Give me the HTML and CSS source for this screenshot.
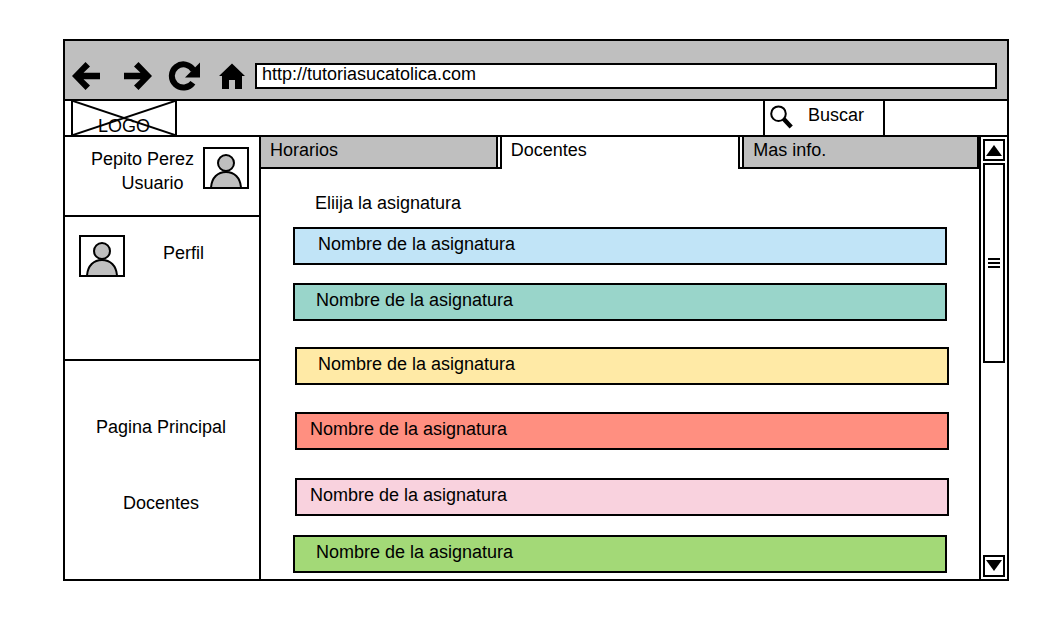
FILE: index.html
```html
<!DOCTYPE html>
<html lang="es">
<head>
<meta charset="utf-8">
<title>Tutorías</title>
<link rel="stylesheet" href="styles.css">
</head>
<body>
<div class="window">
  <div class="toolbar">
    <button class="tool" type="button" aria-label="Atrás">
      <svg width="28" height="28" viewBox="0 0 28 28"><path d="M0 14 13.5 0 18 4.5 11.5 10.8H28V17.2H11.5L18 23.5 13.5 28Z"/></svg>
    </button>
    <button class="tool tool-forward" type="button" aria-label="Adelante">
      <svg width="28" height="28" viewBox="0 0 28 28"><path d="M28 14 14.5 0 10 4.5 16.5 10.8H0V17.2H16.5L10 23.5 14.5 28Z"/></svg>
    </button>
    <button class="tool tool-reload" type="button" aria-label="Recargar">
      <svg width="32" height="30" viewBox="0 0 32 30"><path d="M24.900 21.700A11.600 11.600 0 1 1 25.500 9.200" fill="none" stroke="#000" stroke-width="6"/><path d="M32 1.5V16.5H17Z"/></svg>
    </button>
    <button class="tool tool-home" type="button" aria-label="Inicio">
      <svg width="26" height="26" viewBox="0 0 26 26"><path d="M13 .5 26 13H23V26H16V17H10V26H3V13H0Z"/></svg>
    </button>
    <input class="address" type="text" aria-label="Dirección" value="http://tutoriasucatolica.com">
  </div>

  <header class="header">
    <div class="logo">
      <svg class="logo-cross" viewBox="0 0 102 34" preserveAspectRatio="none"><path d="M0 0 102 34M102 0 0 34" fill="none" stroke="#000" stroke-width="2"/></svg>
      <span>LOGO</span>
    </div>
    <button class="search" type="button">
      <svg width="24" height="24" viewBox="0 0 24 24"><circle cx="9.5" cy="8.700" r="7.300" fill="none" stroke="#000" stroke-width="2"/><path d="M14.500 13.800 22.200 22" stroke="#000" stroke-width="4.4"/></svg>
      <span>Buscar</span>
    </button>
  </header>

  <div class="body">
    <aside class="sidebar">
      <section class="user">
        <div class="user-text">
          <div>Pepito Perez</div>
          <div class="user-role">Usuario</div>
        </div>
        <svg class="avatar" viewBox="0 0 42 38"><path d="M6 39C6.500 28.500 13 23 21 23S35.500 28.500 36 39Z"/><circle cx="21" cy="14" r="8"/></svg>
      </section>
      <section class="profile">
        <svg class="avatar" viewBox="0 0 42 38"><path d="M6 39C6.500 28.500 13 23 21 23S35.500 28.500 36 39Z"/><circle cx="21" cy="14" r="8"/></svg>
        <a class="profile-link" href="#perfil">Perfil</a>
      </section>
      <nav class="nav">
        <a href="#principal">Pagina Principal</a>
        <a href="#docentes">Docentes</a>
      </nav>
    </aside>

    <main class="main">
      <div class="tabs" role="tablist">
        <button class="tab tab-before" type="button" role="tab" aria-selected="false"><span>Horarios</span></button>
        <button class="tab tab-active" type="button" role="tab" aria-selected="true"><span>Docentes</span></button>
        <button class="tab tab-after" type="button" role="tab" aria-selected="false"><span>Mas info.</span></button>
      </div>
      <div class="panel" role="tabpanel">
        <p class="prompt">Eliija la asignatura</p>
        <button class="subject blue" type="button">Nombre de la asignatura</button>
        <button class="subject teal" type="button">Nombre de la asignatura</button>
        <button class="subject yellow inset" type="button">Nombre de la asignatura</button>
        <button class="subject red inset" type="button">Nombre de la asignatura</button>
        <button class="subject pink inset" type="button">Nombre de la asignatura</button>
        <button class="subject green" type="button">Nombre de la asignatura</button>
      </div>
    </main>

    <div class="scrollbar">
      <button class="scroll-button" type="button" aria-label="Subir">
        <svg width="16" height="12" viewBox="0 0 16 12"><path d="M8 1 16 12H0Z"/></svg>
      </button>
      <div class="thumb"><span class="grip"></span></div>
      <button class="scroll-button scroll-down" type="button" aria-label="Bajar">
        <svg width="16" height="12" viewBox="0 0 16 12"><path d="M8 11 16 0H0Z"/></svg>
      </button>
    </div>
  </div>
</div>
</body>
</html>
```
FILE: styles.css
```css
* {
  box-sizing: border-box;
}

body {
  margin: 0;
  min-height: 100vh;
  padding: 39px 39px 39px 63px;
  display: flex;
  background: #fff;
  color: #000;
  font: 18px/20px "Liberation Sans", Arial, sans-serif;
}

button,
input {
  margin: 0;
  padding: 0;
  border: 0;
  border-radius: 0;
  background: none;
  color: inherit;
  font: inherit;
  text-align: left;
}

a {
  color: inherit;
  text-decoration: none;
}

svg {
  display: block;
  flex: none;
}

.window {
  flex: 1;
  min-width: 0;
  display: flex;
  flex-direction: column;
  border: 2px solid #000;
}

/* Browser toolbar */

.toolbar {
  display: flex;
  align-items: center;
  padding: 20px 10px 8px 7px;
  border-bottom: 2px solid #000;
  background: #bfbfbf;
}

.tool-forward {
  margin-left: 24px;
}

.tool-reload {
  margin-left: 16px;
}

.tool-home {
  margin: 0 10px 0 19px;
}

.address {
  flex: 1;
  min-width: 0;
  height: 26px;
  padding: 0 5px 4px;
  border: 2px solid #000;
  background: #fff;
}

/* Site header */

.header {
  display: flex;
  justify-content: space-between;
  height: 36px;
  padding: 0 122px 0 6px;
  border-bottom: 2px solid #000;
}

.logo {
  position: relative;
  width: 106px;
  padding-top: 15px;
  border: solid #000;
  border-width: 0 2px;
  text-align: center;
}

.logo-cross {
  position: absolute;
  inset: 0;
  width: 100%;
  height: 100%;
}

.search {
  display: flex;
  align-items: flex-start;
  gap: 15px;
  width: 122px;
  padding: 4px;
  border: solid #000;
  border-width: 0 2px;
}

/* Layout below the header */

.body {
  flex: 1;
  display: flex;
}

.sidebar {
  flex: none;
  width: 196px;
  display: flex;
  flex-direction: column;
  border-right: 2px solid #000;
}

.user,
.profile {
  display: flex;
  align-items: flex-start;
  border-bottom: 2px solid #000;
}

.user {
  height: 80px;
  justify-content: flex-end;
  gap: 9px;
  padding: 10px;
}

.user-text {
  line-height: 24px;
  text-align: center;
}

.user-role {
  padding-left: 20px;
}

.avatar {
  width: 46px;
  height: 42px;
  border: 2px solid #000;
  fill: #bfbfbf;
  stroke: #000;
  stroke-width: 2;
}

.profile {
  height: 144px;
  gap: 38px;
  padding: 18px 14px;
}

.profile-link {
  padding-top: 8px;
}

.nav {
  flex: 1;
  display: flex;
  flex-direction: column;
  align-items: center;
  gap: 56px;
  padding: 56px 2px 0 0;
}

.main {
  flex: 1;
  min-width: 0;
}

/* Tabs */

.tabs {
  display: flex;
}

.tab {
  flex: 1 1 0;
  box-sizing: content-box;
  border: 0 solid #000;
  border-bottom-width: 2px;
}

.tab span {
  display: block;
  padding: 3px 9px 7px;
  border: 0 solid #000;
  background: #bfbfbf;
}

.tab-before {
  padding-right: 2px;
  border-right-width: 2px;
}

.tab-before span {
  border-right-width: 2px;
}

.tab-after {
  padding-left: 2px;
  border-left-width: 2px;
}

.tab-after span {
  border-left-width: 2px;
  border-right-width: 2px;
}

.tab-active {
  border-bottom-color: transparent;
}

.tab-active span {
  background: none;
}

/* Subject list */

.panel {
  display: flex;
  flex-direction: column;
  padding: 24px 32px 6px;
}

.prompt {
  margin: 0 0 14px;
  padding-left: 22px;
}

.subject {
  padding: 5px 21px 9px;
  border: 2px solid #000;
}

.inset {
  margin: 26px -2px 0 2px;
}

.blue {
  padding-left: 23px;
  background: #c1e4f7;
}

.teal {
  margin-top: 18px;
  background: #99d5ca;
}

.yellow {
  background: #ffeaa6;
}

.red,
.pink {
  margin-top: 28px;
  padding-left: 13px;
}

.red {
  margin-top: 27px;
  background: #ff8f80;
}

.pink {
  background: #f9d2de;
}

.green {
  margin-top: 19px;
  background: #a3d977;
}

/* Scrollbar */

.scrollbar {
  flex: none;
  width: 28px;
  display: flex;
  flex-direction: column;
  gap: 2px;
  padding: 2px;
  border-left: 2px solid #000;
}

.scroll-button {
  display: grid;
  place-items: center;
  height: 22px;
  border: 2px solid #000;
}

.scroll-down {
  margin-top: auto;
}

.thumb {
  display: grid;
  place-items: center;
  height: 200px;
  border: 2px solid #000;
}

.grip {
  width: 12px;
  height: 10px;
  border: solid #000;
  border-width: 2px 0;
  background: linear-gradient(#000, #000) center / 100% 2px no-repeat;
}
```
